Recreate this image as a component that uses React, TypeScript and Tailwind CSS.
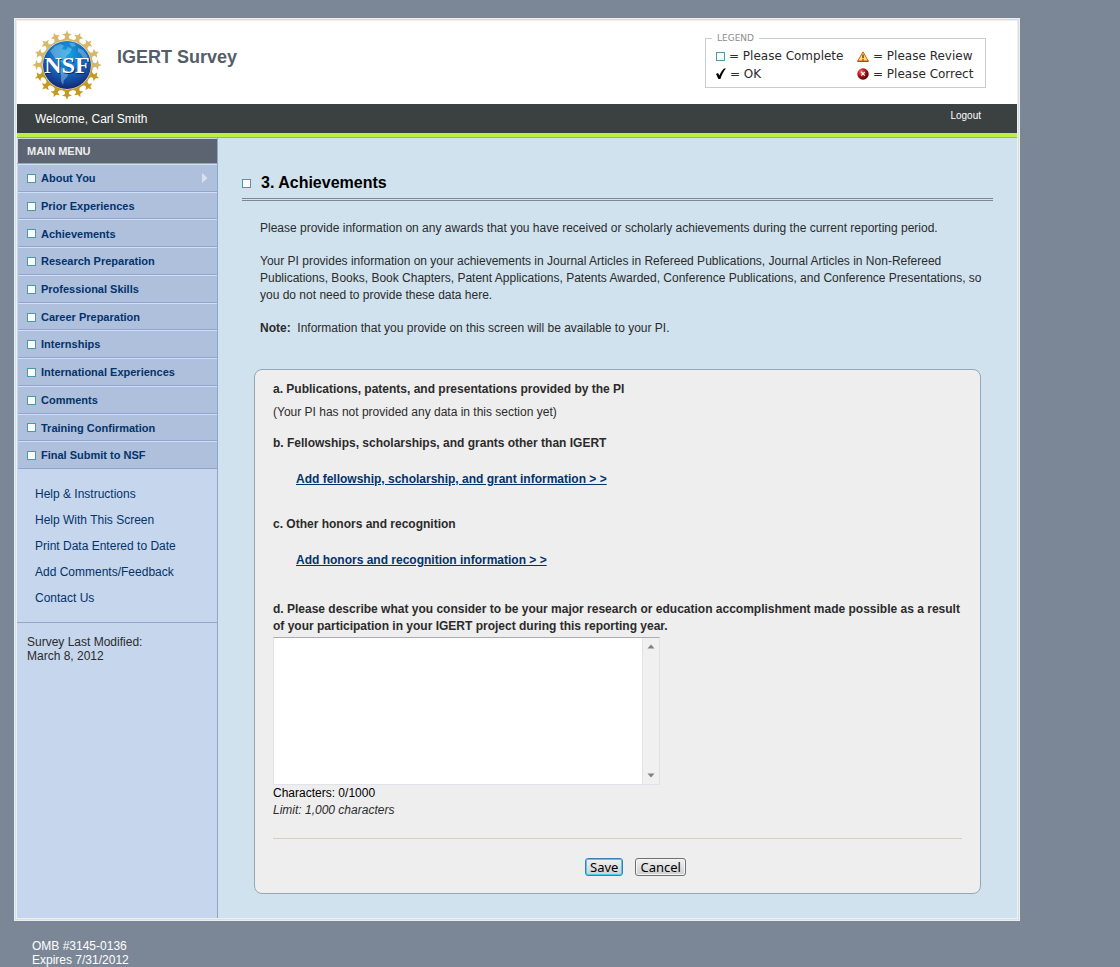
import { useState } from 'react'

const menuItems = [
  'About You',
  'Prior Experiences',
  'Achievements',
  'Research Preparation',
  'Professional Skills',
  'Career Preparation',
  'Internships',
  'International Experiences',
  'Comments',
  'Training Confirmation',
  'Final Submit to NSF',
]

const helpLinks = [
  'Help & Instructions',
  'Help With This Screen',
  'Print Data Entered to Date',
  'Add Comments/Feedback',
  'Contact Us',
]

const rays = Array.from({ length: 16 }, (_, i) => i * 22.5)

function StatusBox() {
  return <span className="block size-[9px] shrink-0 border border-[#4a9aab] bg-[#fbfdf8]" />
}

function NsfLogo() {
  return (
    <svg width="70" height="70" viewBox="-35 -35 70 70" role="img" aria-label="NSF">
      <defs>
        <linearGradient id="gold" gradientUnits="userSpaceOnUse" x1="0" y1="-35" x2="0" y2="35">
          <stop offset="0" stopColor="#dcc07a" />
          <stop offset="0.5" stopColor="#cfa845" />
          <stop offset="1" stopColor="#c09318" />
        </linearGradient>
        <radialGradient id="ocean" cx="0.5" cy="0.28" r="0.72">
          <stop offset="0" stopColor="#12a9e6" />
          <stop offset="0.45" stopColor="#1673c4" />
          <stop offset="0.8" stopColor="#14459a" />
          <stop offset="1" stopColor="#14286a" />
        </radialGradient>
      </defs>
      <circle r="25.2" fill="none" stroke="url(#gold)" strokeWidth="1.4" />
      {rays.map((angle) => (
        <path
          key={angle}
          transform={`rotate(${angle})`}
          fill={angle > 100 && angle < 260 ? '#c49a22' : '#d6b868'}
          d="M0 -34.8 L1.3 -31.6 L4.9 -30.8 L2 -29 C1.6 -27.4 2.4 -26 4.4 -25.2 L3.4 -24 L0 -25.4 L-3.4 -24 L-4.4 -25.2 C-2.4 -26 -1.6 -27.4 -2 -29 L-4.9 -30.8 L-1.3 -31.6 Z"
        />
      ))}
      <circle r="24" fill="url(#ocean)" />
      <g fill="#8fc8ea" opacity="0.5">
        <path d="M-17 -14 L-12 -19 L-6 -21 L-3 -19 L-5 -16 L-1 -15 L1 -18 L5 -16 L3 -12 L0 -10 L-2 -6 L-5 -5 L-4 -2 L-8 -4 L-12 -6 L-14 -10 Z" />
        <path d="M2 -22 L7 -22 L9 -19 L5 -18 Z" />
        <path d="M11 -17 L16 -15 L20 -10 L21 -5 L16 -7 L14 -11 L11 -13 Z" />
        <path d="M-7 2 L-2 4 L2 7 L0 12 L-3 15 L-4 20 L-6 16 L-6 10 L-8 6 Z" />
      </g>
      <text
        x="1"
        y="9"
        textAnchor="middle"
        fontSize="24"
        fontWeight="bold"
        fill="#0c2a66"
        className="font-['Liberation_Serif',serif]"
      >
        NSF
      </text>
      <text
        x="0"
        y="8"
        textAnchor="middle"
        fontSize="24"
        fontWeight="bold"
        fill="#ffffff"
        className="font-['Liberation_Serif',serif]"
      >
        NSF
      </text>
    </svg>
  )
}

function CheckIcon() {
  return (
    <svg width="10" height="12" viewBox="0 0 10 12" aria-hidden="true">
      <path d="M0 6 L2 5 L3.4 7.6 C4.6 4.6 6.2 1.8 8.2 0.4 L10 0.4 C7.8 2.8 5.6 7 4.4 11 L2.4 11 Z" fill="#000" />
    </svg>
  )
}

function WarnIcon() {
  return (
    <svg width="12" height="11" viewBox="0 0 12 11" aria-hidden="true">
      <path d="M6 0.8 L11.4 10.2 L0.6 10.2 Z" fill="#f9e06a" stroke="#d2621c" strokeLinejoin="round" />
      <path d="M0.5 10.3 H11.5" stroke="#b02a10" />
      <path d="M6 3.6 V7.2 M6 8.2 V9.4" stroke="#3a2408" strokeWidth="1.2" />
    </svg>
  )
}

function ErrorIcon() {
  return (
    <svg width="12" height="12" viewBox="0 0 12 12" aria-hidden="true">
      <defs>
        <radialGradient id="ball" cx="0.35" cy="0.3" r="0.75">
          <stop offset="0" stopColor="#f08080" />
          <stop offset="0.4" stopColor="#c4161c" />
          <stop offset="1" stopColor="#3d0507" />
        </radialGradient>
      </defs>
      <circle cx="6" cy="6" r="5.7" fill="url(#ball)" />
      <path d="M4.2 4 L7.8 7.6 M7.8 4 L4.2 7.6" stroke="#fff" strokeWidth="1.3" />
    </svg>
  )
}

export default function App() {
  const [text, setText] = useState('')

  return (
    <div className="min-h-screen bg-[#7b8797] pt-[18px] pl-[14px] font-['Liberation_Sans',Arial,sans-serif] text-xs text-[#2b2b2b]">
      <div className="w-full max-w-[1006px] border-3 border-double border-[#eeeeee] bg-[#d0e2ee]">
        {/* Header */}
        <header>
          <div className="flex items-start bg-white pr-[31px] pb-[4px] pl-[15px]">
            <div className="pt-[9px]">
              <NsfLogo />
            </div>
            <h1 className="mt-[24px] ml-[15px] flex-1 text-lg leading-6 font-bold text-[#555d69]">IGERT Survey</h1>
            <fieldset className="mt-[13px] w-[281px] border border-[#cccccc] px-[10px] pb-[4px] font-['DejaVu_Sans',sans-serif] text-xs leading-[18px]">
              <legend className="ml-[-4px] px-[5px] text-[9px] leading-[9px] text-[#8c8c8c]">LEGEND</legend>
              <div className="grid grid-cols-[141px_1fr] pt-[4px] whitespace-nowrap">
                <div className="flex items-center gap-1">
                  <StatusBox />= Please Complete
                </div>
                <div className="flex items-center gap-1">
                  <WarnIcon />= Please Review
                </div>
                <div className="flex items-center gap-1">
                  <CheckIcon />= OK
                </div>
                <div className="flex items-center gap-1">
                  <ErrorIcon />= Please Correct
                </div>
              </div>
            </fieldset>
          </div>
          <div className="flex h-[33px] justify-between border-b-4 border-[#bdf03c] bg-[#3b4041] pr-9 pl-[18px] text-white">
            <p className="leading-[30px]">Welcome, Carl Smith</p>
            <a href="#logout" className="text-[10px] leading-6">
              Logout
            </a>
          </div>
        </header>

        <div className="flex border-t border-[#90a6cf]">
          {/* Sidebar */}
          <aside className="w-[201px] shrink-0 border-r border-[#90a6c8] bg-[#c6d6ec]">
            <h2 className="mt-px ml-px bg-[#5c6472] pl-[9px] text-[11px] leading-6 font-bold text-[#eeeeee]">MAIN MENU</h2>
            <nav>
              <ul className="flex h-[306px] flex-col border-t border-[#90a6cf] pl-px">
                {menuItems.map((item, i) => (
                  <li key={item} className="flex-1 border-t border-b border-t-[#cfdffa] border-b-[#90a6cf] bg-[#aec0dc]">
                    <a
                      href="#section"
                      className="flex h-full items-center gap-[5px] pt-px pr-[9px] pl-[9px] text-[11px] font-bold text-[#03336b]"
                    >
                      <StatusBox />
                      <span className="flex-1">{item}</span>
                      {i === 0 && (
                        <svg width="6" height="10" viewBox="0 0 6 10" aria-hidden="true">
                          <path d="M0 0 L5.5 5 L0 10 Z" fill="#d6e2f4" />
                        </svg>
                      )}
                    </a>
                  </li>
                ))}
              </ul>
              <ul className="border-b border-[#90a6cf] pt-[12px] pb-[11px] pl-[18px] leading-[26px] text-[#03336b]">
                {helpLinks.map((item) => (
                  <li key={item}>
                    <a href="#help">{item}</a>
                  </li>
                ))}
              </ul>
            </nav>
            <p className="mt-3 pl-[10px] leading-[14px]">
              Survey Last Modified:
              <br />
              March 8, 2012
            </p>
          </aside>

          {/* Content */}
          <main className="min-w-0 flex-1 px-6 pt-[33px] pb-6 leading-[17px]">
            <div className="flex items-center gap-[10px] border-b-3 border-double border-[#7b8797] pb-[3px]">
              <StatusBox />
              <h2 className="text-base leading-6 font-bold text-black">3. Achievements</h2>
            </div>

            <div className="mt-[19px] space-y-4 pl-[18px]">
              <p>
                Please provide information on any awards that you have received or scholarly achievements during the current
                reporting period.
              </p>
              <p>
                Your PI provides information on your achievements in Journal Articles in Refereed Publications, Journal Articles
                in Non-Refereed Publications, Books, Book Chapters, Patent Applications, Patents Awarded, Conference
                Publications, and Conference Presentations, so you do not need to provide these data here.
              </p>
              <p>
                <b>Note:</b>&nbsp; Information that you provide on this screen will be available to your PI.
              </p>
            </div>

            <form
              className="mx-3 mt-8 rounded-lg border border-[#97a7b3] bg-[#eeeeee] px-[18px] pt-[11px] pb-[17px]"
              onSubmit={(e) => e.preventDefault()}
            >
              <h3 className="font-bold">a. Publications, patents, and presentations provided by the PI</h3>
              <p className="mt-[6px]">(Your PI has not provided any data in this section yet)</p>

              <h3 className="mt-[14px] font-bold">b. Fellowships, scholarships, and grants other than IGERT</h3>
              <p className="mt-[19px] pl-[23px]">
                <a href="#fellowship" className="font-bold text-[#03336b] underline">
                  Add fellowship, scholarship, and grant information &gt; &gt;
                </a>
              </p>

              <h3 className="mt-[28px] font-bold">c. Other honors and recognition</h3>
              <p className="mt-[19px] pl-[23px]">
                <a href="#honors" className="font-bold text-[#03336b] underline">
                  Add honors and recognition information &gt; &gt;
                </a>
              </p>

              <label htmlFor="accomplishment" className="mt-[32px] block font-bold">
                d. Please describe what you consider to be your major research or education accomplishment made possible as a
                result of your participation in your IGERT project during this reporting year.
              </label>
              <div className="mt-[2px] flex h-[148px] w-[387px] border border-[#e2e3ea] border-t-[#abadb3] bg-white">
                <textarea
                  id="accomplishment"
                  maxLength={1000}
                  value={text}
                  onChange={(e) => setText(e.target.value)}
                  className="h-full flex-1 resize-none overflow-hidden p-1 outline-none"
                />
                <div className="flex w-[17px] flex-col items-center justify-between border-l border-[#e4e4e8] bg-[#f0f0f0] py-[6px]">
                  <svg width="8" height="5" viewBox="0 0 8 5" aria-hidden="true">
                    <path d="M4 0.5 L7.5 4.5 H0.5 Z" fill="#808080" />
                  </svg>
                  <svg width="8" height="5" viewBox="0 0 8 5" aria-hidden="true">
                    <path d="M4 4.5 L7.5 0.5 H0.5 Z" fill="#808080" />
                  </svg>
                </div>
              </div>
              <p className="text-black">Characters: {text.length}/1000</p>
              <p className="italic">Limit: 1,000 characters</p>

              <hr className="mt-[19px] border-[#d3cfbc]" />
              <div className="mt-[19px] flex justify-center gap-3 pl-9 font-['Noto_Sans',sans-serif] text-[13px] leading-4 text-black">
                <button
                  type="submit"
                  className="rounded-[3px] border border-[#3c7fb1] bg-linear-to-b from-[#f2f2f2] to-[#cfcfcf] px-1 inset-ring inset-ring-[#46cdf5]"
                >
                  Save
                </button>
                <button
                  type="button"
                  onClick={() => setText('')}
                  className="rounded-[3px] border border-[#707070] bg-linear-to-b from-[#f2f2f2] to-[#cfcfcf] px-1 inset-ring inset-ring-[#f6f6f6]"
                >
                  Cancel
                </button>
              </div>
            </form>
          </main>
        </div>
      </div>

      <footer className="mt-[18px] pl-[18px] leading-[14px] text-white">
        OMB #3145-0136
        <br />
        Expires 7/31/2012
      </footer>
    </div>
  )
}
